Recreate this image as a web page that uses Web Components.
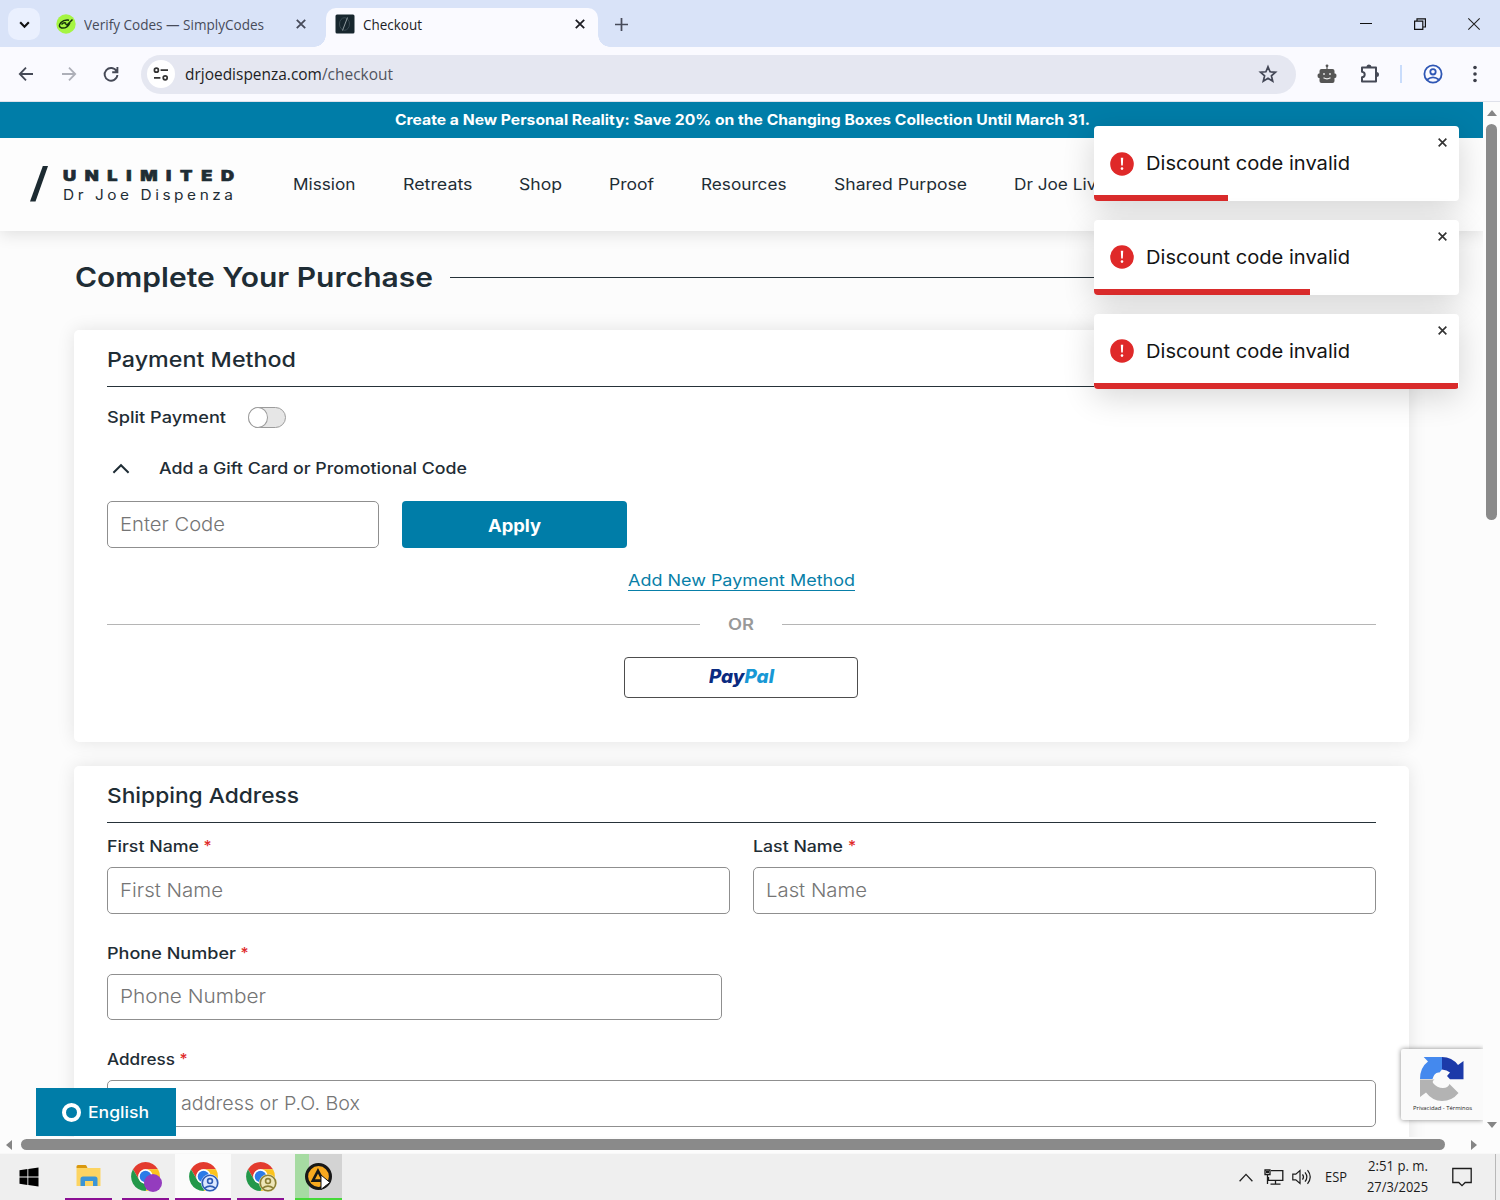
<!DOCTYPE html>
<html lang="en">
<head>
<meta charset="utf-8">
<title>Checkout</title>
<style>
  body {
    margin: 0;
    width: 1500px;
    height: 1200px;
    overflow: hidden;
    font-family: Inter, "Liberation Sans", sans-serif;
    color: #1f2d35;
  }
</style>
</head>
<body>
<desktop-screen></desktop-screen>

<script>
const define = (name, html, setup) => {
  const template = document.createElement('template');
  template.innerHTML = html;
  customElements.define(name, class extends HTMLElement {
    constructor() {
      super();
      this.attachShadow({ mode: 'open' });
      this.shadowRoot.appendChild(template.content.cloneNode(true));
    }

    connectedCallback() {
      if (setup) setup(this, this.shadowRoot);
    }
  });
};

const icons = {
  down: '<svg viewBox="0 0 12 12"><path d="M2 4l4 4 4-4" fill="none" stroke="currentColor" stroke-width="2"/></svg>',
  close: '<svg viewBox="0 0 12 12"><path d="M1.8 1.8l8.4 8.4m0-8.4l-8.4 8.4" fill="none" stroke="currentColor" stroke-width="1.8"/></svg>',
  plus: '<svg viewBox="0 0 12 12"><path d="M6 0v12M0 6h12" stroke="currentColor" stroke-width="1.6"/></svg>',
  min: '<svg viewBox="0 0 12 12"><path d="M0 5.5h12" stroke="#111" stroke-width="1"/></svg>',
  restore: '<svg viewBox="0 0 12 12"><path d="M.6 3.2h8.2v8.2H.6zM3 3V.8h8.4V9H9" fill="none" stroke="#111" stroke-width="1.2"/></svg>',
  winclose: '<svg viewBox="0 0 12 12"><path d="M.3.3l11.4 11.4m0-11.4L.3 11.7" fill="none" stroke="#222" stroke-width="1.1"/></svg>',
  back: '<svg viewBox="0 0 16 16"><path d="M15 8H2m6-6.3L1.8 8 8 14.3" fill="none" stroke="currentColor" stroke-width="1.8"/></svg>',
  forward: '<svg viewBox="0 0 16 16"><path d="M1 8h13M8 1.7L14.2 8 8 14.3" fill="none" stroke="currentColor" stroke-width="1.8"/></svg>',
  reload: '<svg viewBox="0 0 16 16"><path d="M13.6 5.2A6.4 6.4 0 1 0 14.4 9M14.4 1v5.3H9.2" fill="none" stroke="currentColor" stroke-width="1.9"/></svg>',
  tune: '<svg viewBox="0 0 16 14"><g fill="none" stroke="#333" stroke-width="1.7"><circle cx="3.4" cy="3.2" r="2"/><path d="M7.6 3.2H15M1 10.8h6.4"/><circle cx="12.2" cy="10.8" r="2"/></g></svg>',
  star: '<svg viewBox="0 0 18 18"><path d="M9 1.8l2.1 5 5.4.4-4.1 3.6 1.3 5.3L9 13.2l-4.7 2.9 1.3-5.3-4.1-3.6 5.4-.4z" fill="none" stroke="#434756" stroke-width="1.7"/></svg>',
  robot: '<svg viewBox="0 0 20 20"><g fill="#555"><circle cx="10" cy="1.8" r="1.4"/><path d="M9.4 2h1.2v4H9.4z"/><rect x="2.5" y="5" width="15" height="14" rx="2"/><path d="M3 9.6H2q-1.5 0-1.5 2.2T2 14h1zm14 0h1q1.5 0 1.5 2.2T18 14h-1z"/></g><circle cx="7" cy="10" r="1" fill="#ddd"/><circle cx="13" cy="10" r="1" fill="#ddd"/><path d="M6.5 13.8q3.5 2 7 0" stroke="#eee" stroke-width="1.2" fill="none"/></svg>',
  puzzle: '<svg viewBox="0 0 20 20"><path d="M2 3.5h14v14H2v-4.2c3.6-.4 3.6-5.2 0-5.6z" fill="none" stroke="#454956" stroke-width="2" stroke-linejoin="round"/><path d="M6.5 3a2.5 2.5 0 0 1 5 0zM16.5 8a2.5 2.5 0 0 1 0 5z" fill="#454956"/></svg>',
  user: '<svg viewBox="0 0 20 20"><g fill="none" stroke="currentColor" stroke-width="1.8"><circle cx="10" cy="10" r="8.6"/><circle cx="10" cy="7.8" r="2.7"/><path d="M4 15.8q6-4.8 12 0"/></g></svg>',
  dots: '<svg viewBox="0 0 4 18"><g fill="#3b3e49"><circle cx="2" cy="2.5" r="1.8"/><circle cx="2" cy="9" r="1.8"/><circle cx="2" cy="15.5" r="1.8"/></g></svg>',
  simply: '<svg viewBox="0 0 20 20"><circle cx="10" cy="10" r="9.7" fill="#a5f542"/><path d="M16.5 5.5L11 11l-2-1.8M13 6.200Q8 5.500 5 8.500q-3.500 4 .5 5.500 5.500.8 8.500-5M5.500 10.500Q8 8 10 9.200" fill="none" stroke="#16330b" stroke-width="1.5"/></svg>',
  site: '<svg viewBox="0 0 20 20"><rect x=".5" y=".5" width="19" height="19" rx="1.5" fill="#17262e"/><ellipse cx="9.500" cy="10" rx="5" ry="6.3" fill="none" stroke="#42525a" stroke-width=".8"/><path d="M12.500 3.500L7.500 16.500" stroke="#8f9a9f" stroke-width="1"/></svg>',
  up: '<svg viewBox="0 0 18 12"><path d="M1.400 10.800L9 3.200l7.600 7.600" fill="none" stroke="currentColor" stroke-width="2"/></svg>',
  thinup: '<svg viewBox="0 0 14 9"><path d="M.6 8.200L7 1.400l6.400 6.800" fill="none" stroke="#222" stroke-width="1.3"/></svg>',
  slash: '<svg viewBox="0 0 20 38"><path d="M13.500 0H19L5.800 37.500H0z" fill="#1c2a31"/></svg>',
  alert: '<svg viewBox="0 0 24 24"><circle cx="12" cy="12" r="11.800" fill="#df2929"/><path d="M10.800 5.800h2.400l-.4 7.700h-1.600z" fill="#fff"/><circle cx="12" cy="16.600" r="1.300" fill="#fff"/></svg>',
  windows: '<svg viewBox="0 0 20 20"><path d="M.5 3.200L8.400 2v7.400H.5zM9.300 1.900L19.500.5v8.900H9.300zM.5 10.400h7.900V18L.5 16.800zM9.300 10.400h10.200v9.100L9.300 18.100z" fill="#000"/></svg>',
  folder: '<svg viewBox="0 0 26 24"><path d="M1 2.500Q1 1 2.500 1H10q1 0 1.300 1.500L12 4H1z" fill="#d9980e"/><path d="M1 4h24v18H1z" fill="#fcd462"/><path d="M5 22v-7q0-2.500 2.500-2.500h12q2.500 0 2.500 2.500v7h-4.500v-5h-8v5z" fill="#3b95d6"/></svg>',
  chrome: '<svg viewBox="0 0 30 30"><path d="M2.900 8A14 14 0 0 1 27.100 8H15A7 7 0 0 0 8.940 18.500z" fill="#e33b2e"/><path d="M2.900 8A14 14 0 0 1 27.100 8H15A7 7 0 0 0 8.940 18.500z" fill="#fcc31e" transform="rotate(120 15 15)"/><path d="M2.900 8A14 14 0 0 1 27.100 8H15A7 7 0 0 0 8.940 18.500z" fill="#23984a" transform="rotate(240 15 15)"/><circle cx="15" cy="15" r="7" fill="#fff"/><circle cx="15" cy="15" r="5.600" fill="#2c7be8"/></svg>',
  warn: '<svg viewBox="0 0 26 26"><circle cx="13" cy="13" r="11.500" fill="#f8a91f" stroke="#181818" stroke-width="3"/><path d="M12.500 7.500L17.500 17h-10z" fill="none" stroke="#181818" stroke-width="2.500"/></svg>',
  cursor: '<svg viewBox="0 0 11 17"><path d="M1 1v14.500l3.400-2.800L10 8.500z" fill="#fff" stroke="#111" stroke-width="1"/></svg>',
  network: '<svg viewBox="0 0 20 16"><g fill="none" stroke="#1c1c1c" stroke-width="1.300"><path d="M7 1.700h11.800v9.600H4.500V8M11.500 11.500v3.500M6.500 15.200h10"/><path d="M1 1h5v4.500H1zM3.500 5.500V15"/></g><path d="M2 2h3v2H2z" fill="#1c1c1c"/></svg>',
  sound: '<svg viewBox="0 0 20 16"><g fill="none" stroke="#1c1c1c" stroke-width="1.200"><path d="M.8 5.200h3L8 1.500v13L3.800 10.800h-3zM10.500 5.300q2 2.700 0 5.400M13 3.300q3.700 4.700 0 9.400M15.500 1.200q5.500 6.800 0 13.600"/></g></svg>',
  message: '<svg viewBox="0 0 20 20"><path d="M.8 1.500h18.400v14h-6L10 18.700l-3.200-3.200h-6z" fill="none" stroke="#1c1c1c" stroke-width="1.300"/></svg>',
  recaptcha: '<svg viewBox="0 0 44 44"><path d="M22 0v12.500l-2.500 3Q14.500 14.500 12.500 22H0Q0 10.500 8 4.500L3.700 0z" fill="#4489ee"/><path d="M22 0Q32 0 38 8l5.500-4v18.300H30L27 19l3-3.500Q27 13 22 12.500z" fill="#1c3aa9"/><path d="M0 22.500h14.500Q12 24 13 26q4 5 10 5 5 0 6.500-4l9 9Q32 44 22 44 12.500 44 6 35.500L0 40z" fill="#b3b3b3"/></svg>'
};

define('ui-icon', `
<style>
  :host { display: inline-flex; flex: none; }
  svg { display: block; width: 100%; height: 100%; overflow: visible; }
  #art { display: block; width: 100%; height: 100%; }
</style>
<span id="art"></span>
`, (el, root) => {
  el.style.width = el.getAttribute('w') + 'px';
  el.style.height = (el.getAttribute('h') || el.getAttribute('w')) + 'px';
  root.querySelector('#art').innerHTML = icons[el.getAttribute('name')];
});

define('browser-tabs', `
<style>
  :host { display: flex; height: 47px; background: #d9e3f8; font-family: "Open Sans", sans-serif; font-size: 14px; color: #474b5a; }
  .search { margin: 8px 0 0 8px; width: 32px; height: 32px; border-radius: 10px; background: #eaf0fe; display: flex; align-items: center; justify-content: center; color: #111; }
  .tab { display: flex; margin-top: 8px; }
  .tab > ui-icon { margin-top: 6px; }
  .tab fit-text { margin: 7px 0 0 8px; }
  .tab .x { margin: 10px 0 0 auto; }
  .one { width: 250.5px; height: 34px; margin: 8px 19.5px 0 16px; }
  .two { position: relative; box-sizing: border-box; width: 272px; height: 39px; padding: 0 12.5px 0 9px; background: #fafaff; border-radius: 10px 10px 0 0; color: #1d1d24; }
  .two::before, .two::after { content: ""; position: absolute; bottom: 0; width: 12px; height: 12px; }
  .two::before { left: -12px; background: radial-gradient(circle at 0 0, transparent 11.5px, #fafaff 12px); }
  .two::after { right: -12px; background: radial-gradient(circle at 100% 0, transparent 11.5px, #fafaff 12px); }
  .plus { margin: 18px 0 0 17px; }
  .win { display: flex; margin: 18px 20px 0 auto; gap: 42px; }
</style>
<div class="search"><ui-icon name="down" w="13"></ui-icon></div>
<div class="tab one"><ui-icon name="simply" w="20"></ui-icon><fit-text w="180">Verify Codes — SimplyCodes</fit-text><ui-icon class="x" name="close" w="12"></ui-icon></div>
<div class="tab two"><ui-icon name="site" w="20"></ui-icon><fit-text w="59">Checkout</fit-text><ui-icon class="x" name="close" w="12"></ui-icon></div>
<ui-icon class="plus" name="plus" w="13"></ui-icon>
<div class="win"><ui-icon name="min" w="12"></ui-icon><ui-icon name="restore" w="12"></ui-icon><ui-icon name="winclose" w="12"></ui-icon></div>
`);

define('browser-toolbar', `
<style>
  :host { display: flex; align-items: center; height: 54px; border-bottom: 1px solid #dfe1ea; background: #fafaff; color: #454956; font: 15.5px "Open Sans", sans-serif; }
  .url { display: flex; align-items: center; box-sizing: border-box; width: 1155px; height: 39px; margin-left: 22px; padding: 0 19px 0 6px; border-radius: 20px; background: #e5e7f1; color: #51545f; }
  .info { width: 28px; height: 28px; border-radius: 50%; background: #fff; display: flex; align-items: center; justify-content: center; margin-right: 10px; }
  .star { margin-left: auto; }
  b { font-weight: 400; color: #1d1e24; }
  i { width: 2px; height: 18px; margin: 0 21px 0 20px; background: #c9dcfb; }
</style>
<ui-icon name="back" w="16" style="margin-left: 18px"></ui-icon>
<ui-icon name="forward" w="16" style="margin-left: 27px; color: #adafb8"></ui-icon>
<ui-icon name="reload" w="16" style="margin-left: 26px"></ui-icon>
<div class="url">
  <div class="info"><ui-icon name="tune" w="16" h="14"></ui-icon></div>
  <fit-text w="208"><b>drjoedispenza.com</b>/checkout</fit-text>
  <ui-icon class="star" name="star" w="18"></ui-icon>
</div>
<ui-icon name="robot" w="20" style="margin-left: 21px"></ui-icon>
<ui-icon name="puzzle" w="20" style="margin-left: 23px"></ui-icon>
<i></i>
<ui-icon name="user" w="20" style="color: #2f57b5"></ui-icon>
<ui-icon name="dots" w="4" h="18" style="margin-left: 30px"></ui-icon>
`);

define('site-header', `
<style>
  :host { display: block; position: relative; background: #fdfdfd; box-shadow: 0 3px 16px rgba(0, 0, 0, .12); }
  .banner { height: 35.5px; padding-left: 1px; box-sizing: border-box; display: flex; align-items: center; justify-content: center; background: #007da8; color: #fff; font-size: 14.5px; font-weight: 700; }
  nav { display: flex; align-items: center; height: 93.5px; padding-left: 30px; font-size: 16px; gap: 47px; white-space: nowrap; }
  .brand { display: flex; align-items: center; gap: 14px; margin-right: 12px; }
  .name { display: flex; flex-direction: column; padding-top: 1px; }
  .name fit-text { height: 19px; line-height: 19px; font-size: 14px; }
  .name fit-text:first-child { font-weight: 900; font-size: 14.5px; -webkit-text-stroke: .6px #1c2a31; }
</style>
<div class="banner"><fit-text w="695">Create a New Personal Reality: Save 20% on the Changing Boxes Collection Until March 31.</fit-text></div>
<nav>
  <div class="brand">
    <ui-icon name="slash" w="19" h="38"></ui-icon>
    <div class="name"><fit-text w="171" spaced="1.25">UNLIMITED</fit-text><fit-text w="170" spaced="1.1">Dr Joe Dispenza</fit-text></div>
  </div>
  <fit-text w="62.5">Mission</fit-text>
  <fit-text w="69.5">Retreats</fit-text>
  <fit-text w="43">Shop</fit-text>
  <fit-text w="45">Proof</fit-text>
  <fit-text w="85.5">Resources</fit-text>
  <fit-text w="133">Shared Purpose</fit-text>
  <fit-text w="92">Dr Joe Live</fit-text>
</nav>
`);

define('page-card', `
<style>
  :host { display: flow-root; box-sizing: border-box; padding: 0 33px 0 32.5px; margin-bottom: 24px; background: #fff; border-radius: 5px; box-shadow: 0 0 18px rgba(0, 0, 0, .1); }
  header { display: flex; align-items: center; height: 56px; box-sizing: border-box; padding-top: 3px; font-size: 20.5px; font-weight: 500; }
  hr { margin: 0; border: 0; height: 1px; background: #263239; }
</style>
<header><slot name="title"></slot></header>
<hr>
<slot></slot>
`);

define('text-field', `
<style>
  :host { display: block; }
  label { display: flex; align-items: center; gap: 5px; box-sizing: border-box; height: 44px; padding-top: 3px; font-size: 15.5px; font-weight: 500; }
  .star { color: #e02b2b; }
  .box { display: flex; align-items: center; box-sizing: border-box; height: 46.67px; padding-left: 12px; border: 1px solid #8f8f8f; border-radius: 5px; background: #fff; font-size: 19px; font-weight: 300; color: #757575; }
  :host([bare]) label { display: none; }
</style>
<label><slot name="label"></slot><span class="star">*</span></label>
<div class="box"><slot></slot></div>
`);

define('apply-button', `
<style>
  :host { display: flex; align-items: center; justify-content: center; width: 225px; height: 47px; padding-top: 2px; box-sizing: border-box; border-radius: 4px; background: #007da8; color: #fff; font-size: 17px; font-weight: 700; }
</style>
<slot></slot>
`);

define('toggle-switch', `
<style>
  :host { display: block; box-sizing: border-box; width: 38px; height: 21px; border: 1px solid #9c9c9c; border-radius: 11px; background: #e6e6e6; }
  span { display: block; box-sizing: border-box; width: 20px; height: 21px; margin: -1px; border: 1px solid #9c9c9c; border-radius: 50%; background: #fff; }
</style>
<span></span>
`);

define('error-toast', `
<style>
  :host { display: flex; flex-direction: column; box-sizing: border-box; width: 365px; height: 75px; overflow: hidden; border-radius: 4px; background: #fff; color: #141414; font-size: 19px; box-shadow: 0 8px 32px rgba(0, 0, 0, .16); }
  .row { display: flex; align-items: center; height: 69px; padding: 6px 11px 0 16px; box-sizing: border-box; }
  .row fit-text { margin-left: 12px; }
  .bar { height: 6px; background: #d92b2b; }
  .x { align-self: flex-start; margin: 5px 0 0 auto; color: #333; }
</style>
<div class="row"><ui-icon name="alert" w="24"></ui-icon><fit-text w="204"><slot></slot></fit-text><ui-icon class="x" name="close" w="11"></ui-icon></div>
<div class="bar"></div>
`, (el, root) => {
  root.querySelector('.bar').style.width = el.getAttribute('progress') + 'px';
});

define('toast-list', `
<style>
  :host { position: absolute; left: 1094px; top: 24px; display: flex; flex-direction: column; gap: 18.8px; }
</style>
<slot></slot>
`);

define('checkout-page', `
<style>
  :host { display: block; position: relative; width: 1483px; height: 1035px; overflow: hidden; background: #fcfcfc; }
  main { padding: 26px 74px 0; }
  h1 { display: flex; align-items: center; gap: 17px; height: 40px; margin: 0 0 33px; padding-left: 1px; font-size: 27px; font-weight: 600; }
  h1 i { flex: 1; height: 1px; background: #263239; }
  .split { display: flex; align-items: center; height: 61px; margin-bottom: 1px; gap: 22px; font-size: 15.8px; font-weight: 500; }
  .gift { display: flex; align-items: center; height: 38px; gap: 29px; padding-left: 5.5px; font-size: 15.8px; font-weight: 500; }
  .code { display: flex; gap: 23px; margin-top: 14px; }
  .code text-field { width: 272.5px; }
  .link { display: flex; justify-content: center; align-items: center; height: 64px; font-size: 16px; color: #087fa8; }
  .link fit-text { border-bottom: 1px solid #087fa8; line-height: 20px; }
  .or { display: flex; align-items: center; height: 24px; gap: 28px; font-size: 15.5px; font-weight: 600; color: #999; }
  .or i { flex: 1; height: 1px; background: #b5b5b5; }
  .paypal { display: flex; align-items: center; justify-content: center; width: 234px; height: 41px; box-sizing: border-box; margin: 21px auto 44px; padding-bottom: 3px; border: 1px solid #4d4d4d; border-radius: 4px; color: #0a2a80; font: italic 800 18.5px Inter, sans-serif; }
  .paypal b { color: #1898d5; font-weight: inherit; }
  .fields { display: grid; grid-template-columns: 1fr 1fr; gap: 16px 23.5px; }
  .wide { grid-column: 1 / 3; }
  .phone { width: 615.5px; }
  .covered { margin-left: 61.5px; }
  .lang { position: absolute; left: 36px; top: 986px; width: 140px; height: 48px; display: flex; align-items: center; gap: 7px; padding-left: 26px; box-sizing: border-box; background: #007da8; color: #fff; font-size: 16px; font-weight: 500; }
  .ring { width: 19px; height: 19px; box-sizing: border-box; border: 4px solid #fff; border-radius: 50%; }
  .captcha { position: absolute; left: 1401px; top: 947px; width: 82px; height: 71px; display: flex; flex-direction: column; align-items: center; box-sizing: border-box; padding-top: 8px; background: #fafafa; border-radius: 2px 0 0 2px; box-shadow: 0 0 5px #888; font: 6px "Open Sans", sans-serif; color: #222; }
  .captcha fit-text { margin-top: 3px; line-height: 8px; }
</style>
<site-header></site-header>
<main>
  <h1><fit-text w="358">Complete Your Purchase</fit-text><i></i></h1>
  <page-card>
    <fit-text slot="title" w="189">Payment Method</fit-text>
    <div class="split"><fit-text w="119">Split Payment</fit-text><toggle-switch></toggle-switch></div>
    <div class="gift"><ui-icon name="up" w="18" h="12"></ui-icon><fit-text w="308">Add a Gift Card or Promotional Code</fit-text></div>
    <div class="code"><text-field bare><fit-text w="105">Enter Code</fit-text></text-field><apply-button><fit-text w="53">Apply</fit-text></apply-button></div>
    <div class="link"><fit-text w="227">Add New Payment Method</fit-text></div>
    <div class="or"><i></i><fit-text w="26">OR</fit-text><i></i></div>
    <div class="paypal"><fit-text w="65">Pay<b>Pal</b></fit-text></div>
  </page-card>
  <page-card style="height: 500px">
    <fit-text slot="title" w="192">Shipping Address</fit-text>
    <div class="fields">
      <text-field><fit-text slot="label" w="92">First Name</fit-text><fit-text w="103">First Name</fit-text></text-field>
      <text-field><fit-text slot="label" w="90">Last Name</fit-text><fit-text w="101">Last Name</fit-text></text-field>
      <text-field class="wide phone"><fit-text slot="label" w="129">Phone Number</fit-text><fit-text w="146">Phone Number</fit-text></text-field>
      <text-field class="wide"><fit-text slot="label" w="68">Address</fit-text><fit-text class="covered" w="179">address or P.O. Box</fit-text></text-field>
    </div>
  </page-card>
</main>
<toast-list>
  <error-toast progress="134">Discount code invalid</error-toast>
  <error-toast progress="215.5">Discount code invalid</error-toast>
  <error-toast progress="364">Discount code invalid</error-toast>
</toast-list>
<div class="lang"><span class="ring"></span><fit-text w="61">English</fit-text></div>
<div class="captcha"><ui-icon name="recaptcha" w="44"></ui-icon><fit-text w="59">Privacidad - Términos</fit-text></div>
`);

define('scroll-bar', `
<style>
  :host { display: flex; flex-direction: column; align-items: center; width: 17px; height: 1035px; background: #fcfcfc; box-sizing: border-box; padding: 8px 0 9px; }
  i { width: 0; height: 0; border: 5.5px solid transparent; border-top: 0; border-bottom: 6px solid #858585; }
  i:last-child { transform: rotate(180deg); margin-top: auto; }
  span { width: 11px; height: 396px; margin-top: 8px; border-radius: 6px; background: #8a8a8a; }
  :host([horizontal]) { flex-direction: row; width: 1500px; height: 16px; padding: 0 23px 1px 6px; }
  :host([horizontal]) span { width: 1424px; height: 11px; margin: 0 0 0 9px; }
  :host([horizontal]) i { border: 5.5px solid transparent; border-left: 0; border-right: 6px solid #858585; }
  :host([horizontal]) i:last-child { margin: 0 0 0 auto; }
</style>
<i></i><span></span><i></i>
`);

define('task-item', `
<style>
  :host { display: flex; position: relative; align-items: center; justify-content: center; box-sizing: border-box; width: 47px; height: 46px; border-bottom: 2px solid #8a0f94; }
  :host([active]) { width: 56px; background: #fbfbfb; }
  :host([ready]) { background: linear-gradient(90deg, #a6dba2 14px, #d3d3d3 14px); border-color: #45d838; }
  ::slotted(.badge) { position: absolute; left: 50%; top: 50%; margin: -2px 0 0 -2px; width: 18px; height: 18px; box-sizing: border-box; border-radius: 50%; }
  ::slotted(.cursor) { position: absolute; left: 25px; top: 20px; }
</style>
<slot></slot>
`);

define('task-bar', `
<style>
  :host { display: flex; align-items: center; height: 47px; background: #efefef; border-top: 1px solid #f8f8f8; box-sizing: border-box; color: #1c1c1c; font: 15px "Open Sans", sans-serif; }
  .tray { display: flex; align-items: center; margin-left: auto; }
  .clock { display: flex; flex-direction: column; align-items: center; margin: -2px 24px 0 20px; }
  .clock fit-text { height: 21px; line-height: 21px; font-size: 14px; }
  .edge { width: 4px; height: 46px; margin-left: 23px; border-left: 1px solid #b8b8b8; }
</style>
<ui-icon name="windows" w="20" style="margin-left: 18.5px"></ui-icon>
<task-item style="margin-left: 26.5px"><ui-icon name="folder" w="27" h="24"></ui-icon></task-item>
<task-item style="margin-left: 10px"><ui-icon name="chrome" w="31"></ui-icon><span class="badge" style="background: #943cbe"></span></task-item>
<task-item active style="margin-left: 6px"><ui-icon name="chrome" w="31"></ui-icon><ui-icon class="badge" name="user" w="18" style="background: #dce8ff; color: #2e5bb4"></ui-icon></task-item>
<task-item style="margin-left: 6px"><ui-icon name="chrome" w="31"></ui-icon><ui-icon class="badge" name="user" w="18" style="background: #eee6b8; color: #8c8036"></ui-icon></task-item>
<task-item ready style="margin-left: 11px"><ui-icon name="warn" w="27"></ui-icon><ui-icon class="cursor" name="cursor" w="11" h="17"></ui-icon></task-item>
<div class="tray">
  <ui-icon name="thinup" w="14" h="9"></ui-icon>
  <ui-icon name="network" w="20" h="16" style="margin-left: 11px"></ui-icon>
  <ui-icon name="sound" w="20" h="16" style="margin-left: 8px"></ui-icon>
  <fit-text w="22" style="margin: -3px 0 0 13px">ESP</fit-text>
  <div class="clock"><fit-text w="60">2:51 p. m.</fit-text><fit-text w="61">27/3/2025</fit-text></div>
  <ui-icon name="message" w="20"></ui-icon>
  <div class="edge"></div>
</div>
`);

define('desktop-screen', `
<style>
  :host { display: flex; flex-direction: column; width: 1500px; height: 1200px; background: #fcfcfc; }
  .view { display: flex; }
</style>
<browser-tabs></browser-tabs>
<browser-toolbar></browser-toolbar>
<div class="view"><checkout-page></checkout-page><scroll-bar></scroll-bar></div>
<scroll-bar horizontal></scroll-bar>
<task-bar></task-bar>
`);

// Registered last: it measures text once every parent has its styles.
// "spaced" stretches the glyphs by its value and fills the rest with letter-spacing.
define('fit-text', `
<style>
  :host { display: inline-block; flex: none; white-space: nowrap; }
  span { display: inline-block; transform-origin: 0 50%; }
</style>
<span><slot></slot></span>
`, (el, root) => {
  const span = root.querySelector('span');
  const width = Number(el.getAttribute('w'));
  const natural = span.getBoundingClientRect().width;
  const stretch = Number(el.getAttribute('spaced')) || width / natural;
  el.style.width = width + 'px';
  if (el.hasAttribute('spaced')) {
    span.style.letterSpacing = (width / stretch - natural) / (el.textContent.length - 1) + 'px';
  }
  span.style.transform = `scaleX(${stretch})`;
});
</script>
</body>
</html>
